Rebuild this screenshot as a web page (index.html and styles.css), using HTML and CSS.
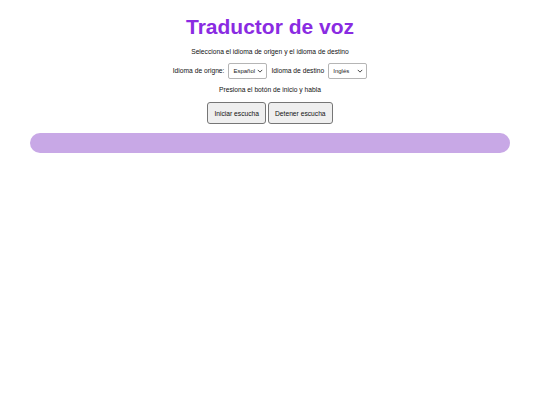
FILE: index.html
```html
<!DOCTYPE html>
<html lang="es">
<head>
<meta charset="utf-8">
<title>Traductor de voz</title>
<link rel="stylesheet" href="styles.css">
</head>
<body>
<main class="app">
  <h1 class="title">Traductor de voz</h1>
  <p class="subtitle">Selecciona el idioma de origen y el idioma de destino</p>
  <div class="langs">
    <label class="lang-label" for="src">Idioma de origne:</label>
    <span class="select-wrap">
      <select id="src" class="lang-select">
        <option>Español</option>
        <option>Inglés</option>
      </select>
      <svg class="chev" viewBox="0 0 8 5" width="6" height="4"><path d="M1 1 L4 4 L7 1" fill="none" stroke="#333" stroke-width="1.2"/></svg>
    </span>
    <label class="lang-label" for="dst">Idioma de destino</label>
    <span class="select-wrap">
      <select id="dst" class="lang-select">
        <option>Inglés</option>
        <option>Español</option>
      </select>
      <svg class="chev" viewBox="0 0 8 5" width="6" height="4"><path d="M1 1 L4 4 L7 1" fill="none" stroke="#333" stroke-width="1.2"/></svg>
    </span>
  </div>
  <p class="hint">Presiona el botón de inicio y habla</p>
  <div class="buttons">
    <button class="btn">Iniciar escucha</button>
    <button class="btn">Detener escucha</button>
  </div>
  <div class="output"></div>
</main>
</body>
</html>
```

FILE: styles.css
```css
html, body {
  margin: 0;
  padding: 0;
  background: #ffffff;
}

body {
  font-family: "Liberation Sans", Arial, sans-serif;
  color: #111111;
}

.app {
  display: flex;
  flex-direction: column;
  align-items: stretch;
  padding: 0 30px;
  text-align: center;
}

.title {
  margin: 15px 0 0;
  font-size: 21px;
  line-height: 24px;
  font-weight: bold;
  color: #8a2be2;
}

.subtitle {
  margin: 9px 0 0;
  font-size: 6.7px;
  line-height: 8px;
}

.langs {
  margin-top: 7px;
  height: 16px;
  display: flex;
  justify-content: center;
  align-items: center;
  gap: 4px;
}

.lang-label {
  font-size: 6.7px;
  line-height: 8px;
}

.select-wrap {
  position: relative;
  display: block;
  height: 16px;
}

.lang-select {
  -webkit-appearance: none;
  appearance: none;
  display: block;
  width: 39px;
  height: 16px;
  margin: 0;
  padding: 0 0 0 4px;
  font-family: "Liberation Sans", Arial, sans-serif;
  font-size: 6px;
  color: #222;
  background: #ffffff;
  border: 1px solid #b5b5b5;
  border-radius: 2px;
  text-align: left;
}

.chev {
  position: absolute;
  right: 4px;
  top: 6px;
  pointer-events: none;
}

.hint {
  margin: 7px 0 0;
  font-size: 6.7px;
  line-height: 8px;
}

.buttons {
  margin-top: 8px;
  display: flex;
  justify-content: center;
  gap: 2px;
}

.btn {
  height: 22px;
  padding: 0 6px;
  font-family: "Liberation Sans", Arial, sans-serif;
  font-size: 6.7px;
  color: #111;
  background: #efefef;
  border: 1px solid #767676;
  border-radius: 3px;
}

.output {
  margin-top: 9px;
  height: 20px;
  border-radius: 10px;
  background: #c8a8e6;
}
```
